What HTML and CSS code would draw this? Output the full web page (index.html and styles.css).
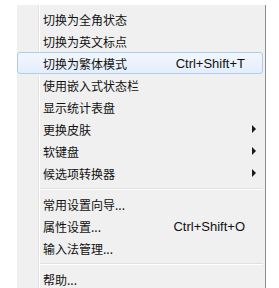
FILE: index.html
```html
<!DOCTYPE html>
<html lang="zh-CN">
<head>
    <meta charset="UTF-8">
    <meta name="viewport" content="width=device-width, initial-scale=1.0">
    <title>输入法菜单</title>
    <link rel="stylesheet" href="styles.css">
</head>
<body>
    <div class="menu">
        <div class="menu-item"><span class="label">切换为全角状态</span><span class="tail"></span></div>
        <div class="menu-item"><span class="label">切换为英文标点</span><span class="tail"></span></div>
        <div class="menu-item active"><span class="label">切换为繁体模式</span><span class="shortcut">Ctrl+Shift+T</span><span class="tail"></span></div>
        <div class="menu-item"><span class="label">使用嵌入式状态栏</span><span class="tail"></span></div>
        <div class="menu-item"><span class="label">显示统计表盘</span><span class="tail"></span></div>
        <div class="menu-item"><span class="label">更换皮肤</span><span class="tail"><span class="arrow"></span></span></div>
        <div class="menu-item"><span class="label">软键盘</span><span class="tail"><span class="arrow"></span></span></div>
        <div class="menu-item"><span class="label">候选项转换器</span><span class="tail"><span class="arrow"></span></span></div>
        <div class="separator"></div>
        <div class="menu-item"><span class="label">常用设置向导...</span><span class="tail"></span></div>
        <div class="menu-item"><span class="label">属性设置...</span><span class="shortcut">Ctrl+Shift+O</span><span class="tail"></span></div>
        <div class="menu-item"><span class="label">输入法管理...</span><span class="tail"></span></div>
        <div class="separator"></div>
        <div class="menu-item"><span class="label">帮助...</span><span class="tail"></span></div>
    </div>
</body>
</html>
```

FILE: styles.css
```css
body {
    margin: 0;
    height: 100vh;
    background: #ffffff;
    font-family: "Noto Sans CJK SC", "Noto Sans", sans-serif;
    overflow: hidden;
}

.menu {
    width: 249px;
    margin: 5px 0 0 17px;
    padding-top: 3px;
    height: calc(100vh - 5px);
    box-sizing: border-box;
    overflow: hidden;
    border-right: 1px solid #8e8e8e;
    background: linear-gradient(to right, #f0f0f0 21px, #e2e3e3 21px, #e2e3e3 22px, #ffffff 22px, #ffffff 23px, #f0f0f0 23px);
}

.menu-item {
    display: flex;
    align-items: center;
    height: 22px;
    margin-right: 2px;
    padding-left: 26px;
    font-size: 12px;
    color: #111111;
    box-sizing: border-box;
}

.menu-item.active {
    border: 1px solid #aecbf0;
    border-radius: 3px;
    padding-left: 25px;
    background: linear-gradient(#f2f7fd, #e3eefb);
}

.label {
    flex: 1;
    white-space: nowrap;
}

.shortcut {
    font-family: "Liberation Sans", Arial, sans-serif;
    font-size: 13px;
    color: #111111;
}

.tail {
    width: 18px;
    display: flex;
    align-items: center;
}

.menu-item.active .tail {
    width: 17px;
}

.arrow {
    margin-left: 7px;
    width: 0;
    height: 0;
    border-top: 4px solid transparent;
    border-bottom: 4px solid transparent;
    border-left: 4px solid #1a1a1a;
}

.separator {
    height: 9px;
    margin: 0 2px 0 23px;
    background: linear-gradient(#f0f0f0 4px, #e0e0e0 4px, #e0e0e0 5px, #ffffff 5px, #ffffff 6px, #f0f0f0 6px);
}
```
